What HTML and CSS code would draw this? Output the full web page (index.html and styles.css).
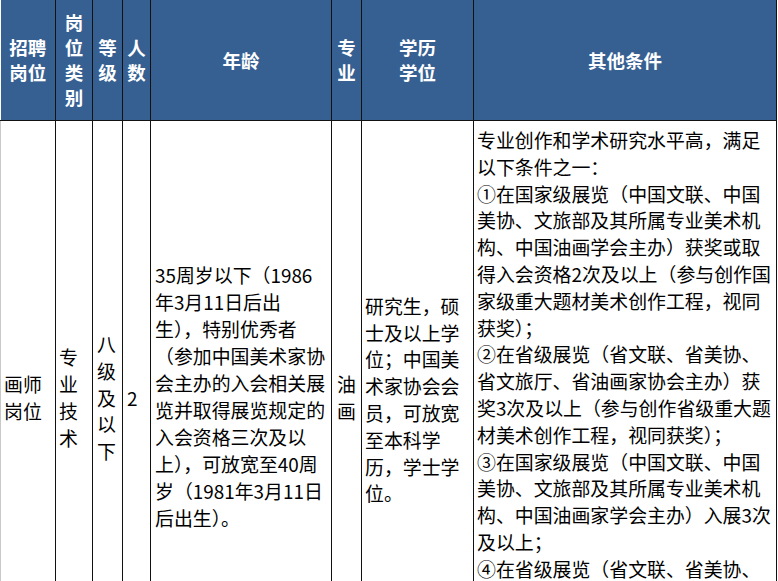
FILE: index.html
```html
<!DOCTYPE html>
<html lang="zh-CN">
<head>
<meta charset="utf-8">
<title>招聘岗位</title>
<link rel="stylesheet" href="styles.css">
</head>
<body>
<table class="sheet">
  <colgroup>
    <col class="c1"><col class="c2"><col class="c3"><col class="c4"><col class="c5"><col class="c6"><col class="c7"><col class="c8">
  </colgroup>
  <thead>
    <tr class="head">
      <th>招聘<br>岗位</th>
      <th>岗<br>位<br>类<br>别</th>
      <th>等<br>级</th>
      <th>人<br>数</th>
      <th>年龄</th>
      <th>专<br>业</th>
      <th>学历<br>学位</th>
      <th>其他条件</th>
    </tr>
  </thead>
  <tbody>
    <tr class="row">
      <td class="first">画师<br>岗位</td>
      <td>专<br>业<br>技<br>术</td>
      <td class="lvl">八<br>级<br>及<br>以<br>下</td>
      <td class="num">2</td>
      <td class="age">35周岁以下（1986<br>年3月11日后出<br>生），特别优秀者<br>（参加中国美术家协<br>会主办的入会相关展<br>览并取得展览规定的<br>入会资格三次及以<br>上），可放宽至40周<br>岁（1981年3月11日<br>后出生）。</td>
      <td class="major">油<br>画</td>
      <td class="edu">研究生，硕<br>士及以上学<br>位；中国美<br>术家协会会<br>员，可放宽<br>至本科学<br>历，学士学<br>位。</td>
      <td class="other">专业创作和学术研究水平高，满足<br>以下条件之一：<br>①在国家级展览（中国文联、中国<br>美协、文旅部及其所属专业美术机<br>构、中国油画学会主办）获奖或取<br>得入会资格2次及以上（参与创作国<br>家级重大题材美术创作工程，视同<br>获奖）；<br>②在省级展览（省文联、省美协、<br>省文旅厅、省油画家协会主办）获<br>奖3次及以上（参与创作省级重大题<br>材美术创作工程，视同获奖）；<br>③在国家级展览（中国文联、中国<br>美协、文旅部及其所属专业美术机<br>构、中国油画家学会主办）入展3次<br>及以上；<br>④在省级展览（省文联、省美协、<br>省文旅厅、省油画家协会主办）入<br>展5次及以上。</td>
    </tr>
  </tbody>
</table>
</body>
</html>
```

FILE: styles.css
```css
html, body {
  margin: 0;
  padding: 0;
  background: #ffffff;
}

.sheet {
  border-collapse: collapse;
  table-layout: fixed;
  width: 776px;
  font-family: "Noto Sans CJK SC", "Noto Sans", sans-serif;
}

.c1 { width: 55px; }
.c2 { width: 37px; }
.c3 { width: 30px; }
.c4 { width: 28px; }
.c5 { width: 181px; }
.c6 { width: 30px; }
.c7 { width: 112px; }
.c8 { width: 303px; }

.head th {
  height: 120px;
  padding: 0;
  background: #366092;
  color: #ffffff;
  font-size: 18.5px;
  font-weight: bold;
  line-height: 25px;
  text-align: center;
  vertical-align: middle;
  border-left: 1px solid #111111;
  border-bottom: 1px solid #111111;
  white-space: nowrap;
  overflow: hidden;
}

.head th:first-child {
  border-left: none;
}

.head th:last-child {
  border-right: 1px solid #111111;
}

.row td {
  height: 548px;
  padding: 0 3px;
  color: #000000;
  font-size: 18.9px;
  line-height: 26.8px;
  text-align: left;
  vertical-align: middle;
  border-left: 1px solid #111111;
  border-right: 1px solid #111111;
  white-space: nowrap;
  overflow: hidden;
}

.row td.first {
  border-left: 1px solid #c8c8c8;
}

.row td.lvl,
.row td.num {
  padding-left: 4px;
}

.row td.age {
  padding-left: 4px;
  padding-bottom: 4px;
  line-height: 27.1px;
}

.row td.major {
  padding-left: 5px;
}

.row td.edu {
  padding-top: 4px;
}

.row td.other {
  vertical-align: top;
  padding-top: 6px;
}
```
